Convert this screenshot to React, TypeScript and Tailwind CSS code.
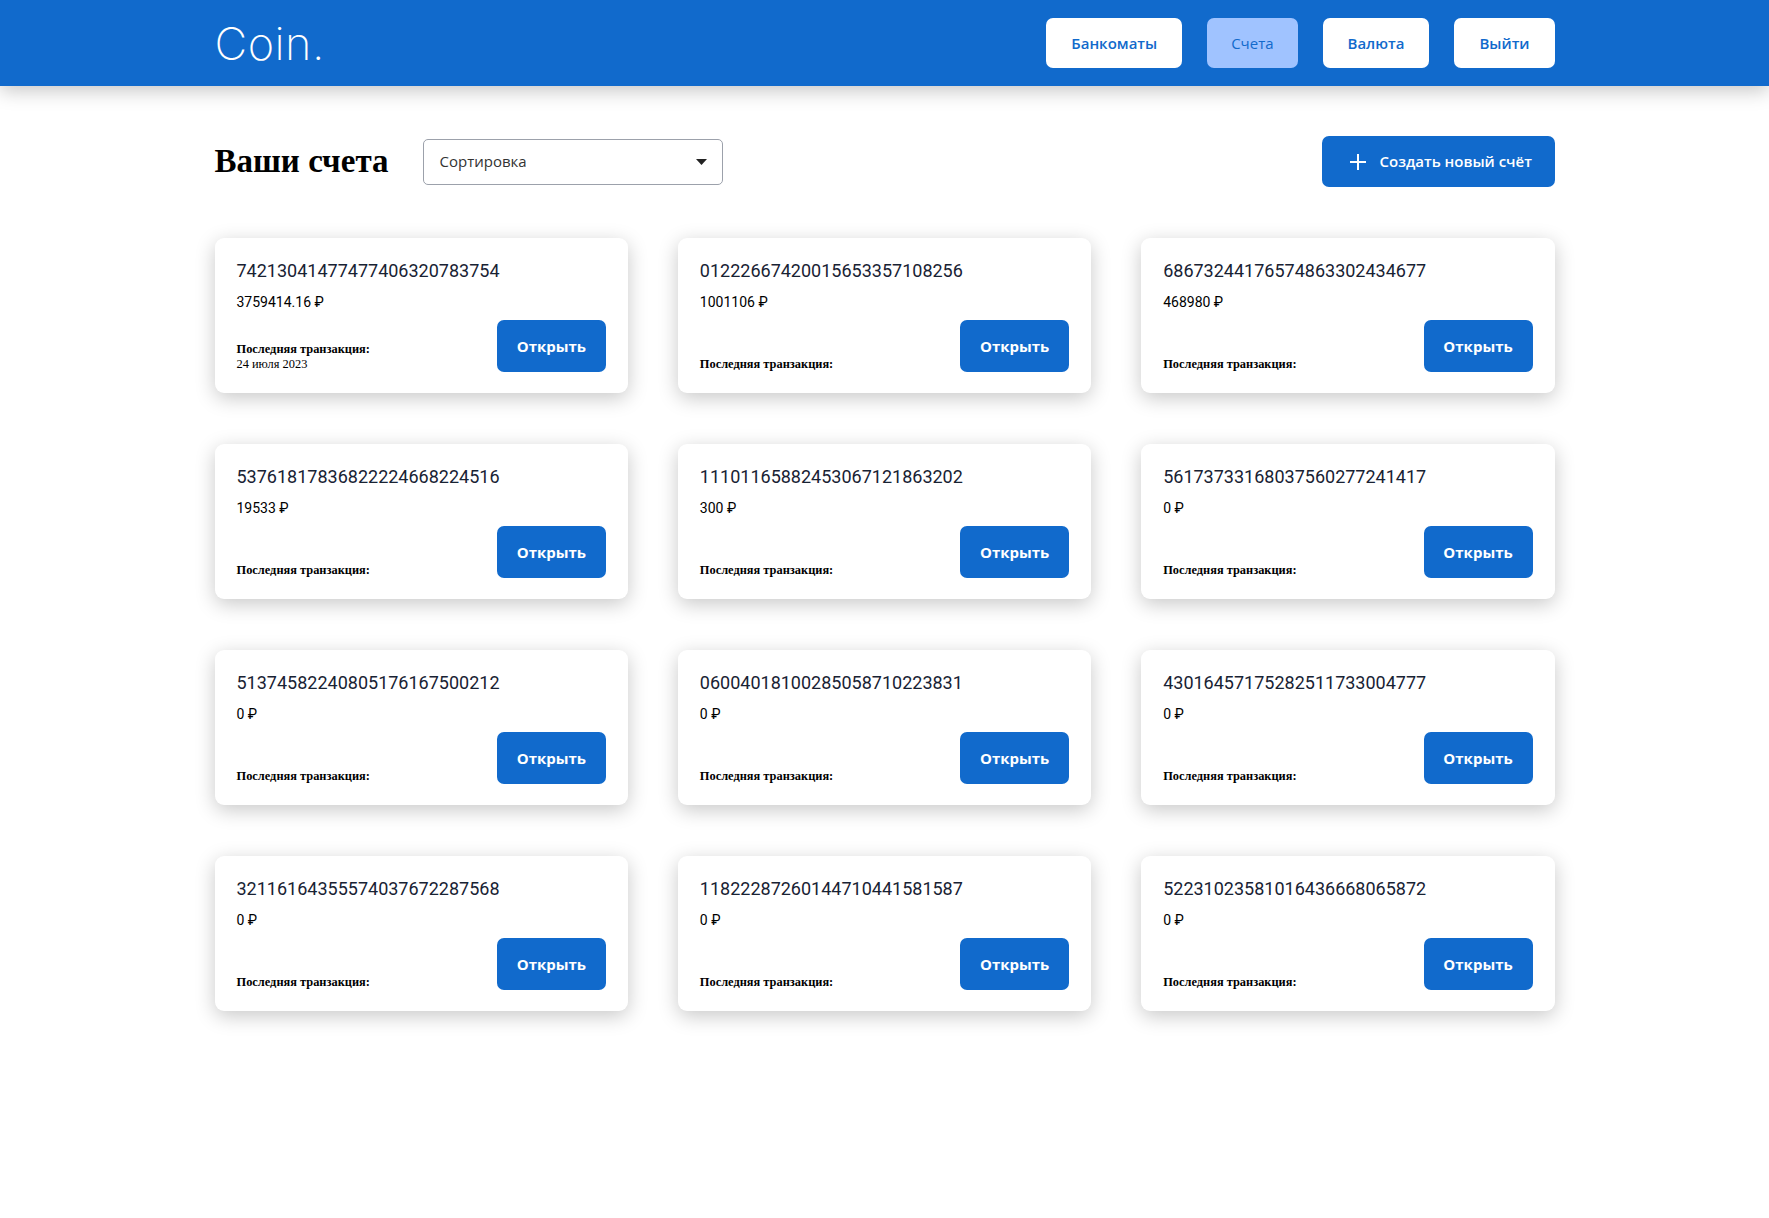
import React from 'react';

type Account = { number: string; balance: string; date?: string };

const accounts: Account[] = [
  { number: '74213041477477406320783754', balance: '3759414.16', date: '24 июля 2023' },
  { number: '01222667420015653357108256', balance: '1001106' },
  { number: '68673244176574863302434677', balance: '468980' },
  { number: '53761817836822224668224516', balance: '19533' },
  { number: '11101165882453067121863202', balance: '300' },
  { number: '56173733168037560277241417', balance: '0' },
  { number: '51374582240805176167500212', balance: '0' },
  { number: '06004018100285058710223831', balance: '0' },
  { number: '43016457175282511733004777', balance: '0' },
  { number: '32116164355574037672287568', balance: '0' },
  { number: '11822287260144710441581587', balance: '0' },
  { number: '52231023581016436668065872', balance: '0' },
];

const navItems = [
  { label: 'Банкоматы', active: false },
  { label: 'Счета', active: true },
  { label: 'Валюта', active: false },
  { label: 'Выйти', active: false },
];

function Header() {
  return (
    <header className="relative z-10 h-[86px] bg-[#116ACC] shadow-[0_5px_18px_rgba(0,0,0,0.22)]">
      <div className="mx-auto flex h-full w-[1340px] items-center justify-between">
        <div className="font-['Inter',sans-serif] text-[45px] font-extralight leading-none tracking-[0.5px] text-white">
          Coin.
        </div>
        <nav className="flex items-center gap-[25px]">
          {navItems.map((item) => (
            <button
              key={item.label}
              className={
                item.active
                  ? "h-[50px] rounded-[7px] bg-[#A0C3FF] px-[24px] font-['Open_Sans',sans-serif] text-[15px] font-medium text-[#116ACC]"
                  : "h-[50px] rounded-[7px] bg-white px-[25px] font-['Open_Sans',sans-serif] text-[15px] font-semibold text-[#116ACC]"
              }
            >
              {item.label}
            </button>
          ))}
        </nav>
      </div>
    </header>
  );
}

function AccountCard({ account }: { account: Account }) {
  return (
    <div className="flex h-[155px] flex-col rounded-[9px] bg-white px-[22px] pt-[22px] pb-[21px] shadow-[0_5px_20px_rgba(0,0,0,0.22)]">
      <div className="font-['Roboto',sans-serif] text-[18px] leading-[21px] text-[#182233]">
        {account.number}
      </div>
      <div className="mt-[13px] font-['Roboto',sans-serif] text-[14px] leading-[16px] text-[#000]">
        {account.balance} ₽
      </div>
      <div className="mt-auto flex items-end justify-between">
        <div className="font-['Liberation_Serif',serif] text-[12.4px] leading-[15px] text-black">
          <div className="font-bold">Последняя транзакция:</div>
          {account.date && <div>{account.date}</div>}
        </div>
        <button className="h-[52px] w-[109px] rounded-[7px] bg-[#116ACC] font-['Open_Sans',sans-serif] text-[15px] font-bold text-white">
          Открыть
        </button>
      </div>
    </div>
  );
}

export default function App() {
  return (
    <div className="min-h-[1218px] bg-white">
      <Header />
      <main className="mx-auto w-[1340px] pt-[50px]">
        <div className="flex items-center justify-between">
          <div className="flex items-center gap-[34px]">
            <h1 className="font-['Liberation_Serif',serif] text-[33px] font-bold leading-none text-black">
              Ваши счета
            </h1>
            <div className="flex h-[46px] w-[300px] items-center justify-between rounded-[5px] border border-[#9CA1AB] pl-[16px] pr-[15px]">
              <span className="font-['Open_Sans',sans-serif] text-[15px] text-[#333]">Сортировка</span>
              <svg width="11" height="6" viewBox="0 0 11 6">
                <path d="M0 0h11L5.5 6z" fill="#222" />
              </svg>
            </div>
          </div>
          <button className="flex h-[51px] w-[233px] items-center gap-[14px] rounded-[7px] bg-[#116ACC] pl-[28px] font-['Open_Sans',sans-serif] text-[15px] font-semibold text-white">
            <svg width="16" height="16" viewBox="0 0 16 16" fill="none">
              <path d="M8 0v16M0 8h16" stroke="white" strokeWidth="2" />
            </svg>
            Создать новый счёт
          </button>
        </div>
        <div className="mt-[51px] grid grid-cols-3 gap-x-[50px] gap-y-[51px]">
          {accounts.map((a) => (
            <AccountCard key={a.number} account={a} />
          ))}
        </div>
      </main>
    </div>
  );
}
